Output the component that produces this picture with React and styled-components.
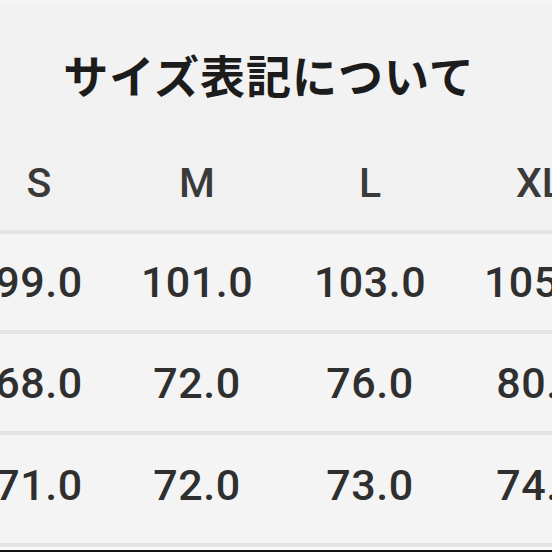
import React from 'react';
import styled, { createGlobalStyle } from 'styled-components';

const sizes = ['S', 'M', 'L', 'XL'];

// 表の数値
const rows = [
  { values: ['99.0', '101.0', '103.0', '105.0'], height: 96 },
  { values: ['68.0', '72.0', '76.0', '80.0'], height: 97 },
  { values: ['71.0', '72.0', '73.0', '74.0'], height: 108, pad: 8 },
];

function App() {
  return (
    <>
      <GlobalStyle />
      <Page>
        <Title>サイズ表記について</Title>
        <Table>
          <HeadRow>
            {sizes.map((size) => (
              <HeadCell key={size}>{size}</HeadCell>
            ))}
          </HeadRow>
          {rows.map(({ values, height, pad }, index) => (
            <BodyRow key={index} $height={height} $pad={pad || 0}>
              {values.map((value, i) => (
                <BodyCell key={i}>{value}</BodyCell>
              ))}
            </BodyRow>
          ))}
        </Table>
        <BottomEdge />
      </Page>
    </>
  );
}

export default App;

const GlobalStyle = createGlobalStyle`
  html, body {
    margin: 0;
    padding: 0;
    background: #f2f2f2;
    overflow: hidden;
  }
`;

const Page = styled.div`
  width: 552px;
  height: 552px;
  overflow: hidden;
  background: #f2f2f2;
  border-top: 3px solid #f6f6f6;
  box-sizing: border-box;
  font-family: Roboto, 'Noto Sans', sans-serif;
  color: #333;
`;

const Title = styled.h1`
  margin: 0;
  padding-top: 47px;
  height: 50px;
  line-height: 50px;
  text-align: center;
  width: 538px;
  font-family: 'Noto Sans CJK JP', sans-serif;
  font-size: 45px;
  font-weight: 700;
  letter-spacing: 1px;
  color: #1c1c1c;
`;

const Table = styled.div`
  margin-left: -40px;
  width: 660px;
`;

const Row = styled.div`
  display: grid;
  grid-template-columns: 158px 158px 188px 152px;
  align-items: center;
  box-sizing: border-box;
  border-bottom: 4px solid #e3e3e3;
`;

const HeadRow = styled(Row)`
  height: 134px;
  padding-top: 36px;
  background: #f1f1f1;
`;

const BodyRow = styled(Row)`
  height: ${(p) => p.$height + 4}px;
  padding-bottom: ${(p) => p.$pad}px;
  background: #f4f4f4;
`;

const HeadCell = styled.div`
  text-align: center;
  font-size: 41px;
  font-weight: 500;
  color: #3a3a3a;
`;

const BodyCell = styled.div`
  text-align: center;
  font-size: 43px;
  font-weight: 500;
  letter-spacing: 0.5px;
  color: #2f2f2f;
`;

const BottomEdge = styled.div`
  height: 3px;
  background: #fafafa;
  border-bottom: 3px solid #111;
`;
